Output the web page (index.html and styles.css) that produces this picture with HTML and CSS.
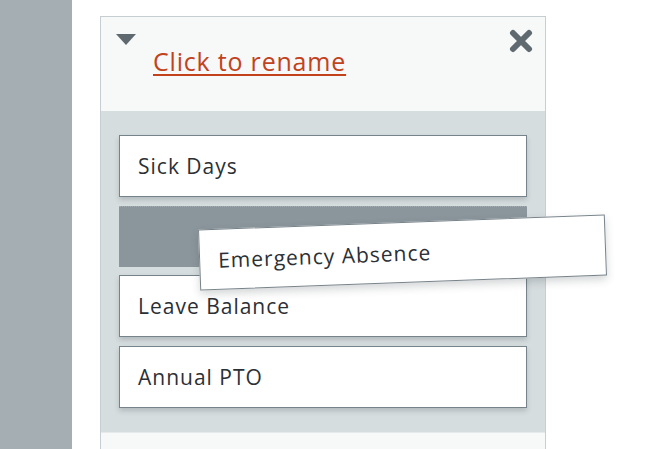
FILE: index.html
```html
<!DOCTYPE html>
<html lang="en">
<head>
    <meta charset="UTF-8">
    <meta name="viewport" content="width=device-width, initial-scale=1.0">
    <title>Leave types</title>
    <link rel="stylesheet" href="styles.css">
</head>
<body>
    <div class="page">
        <div class="sidebar"></div>
        <div class="main">
            <div class="panel">
                <div class="panel-head">
                    <svg class="caret" width="20" height="11" viewBox="0 0 20 11">
                        <path d="M0 0 H20 L10 11 Z" fill="#5f6a70"/>
                    </svg>
                    <a class="title" href="#">Click to rename</a>
                    <svg class="close" width="24" height="24" viewBox="0 0 24 24">
                        <path d="M4 4 L20 20 M20 4 L4 20" stroke="#5f6a70" stroke-width="6" stroke-linecap="round"/>
                    </svg>
                </div>
                <div class="panel-body">
                    <div class="item">Sick Days</div>
                    <div class="slot"></div>
                    <div class="item">Leave Balance</div>
                    <div class="item">Annual PTO</div>
                </div>
                <div class="panel-foot"></div>
            </div>
        </div>
        <div class="item ghost">Emergency Absence</div>
    </div>
</body>
</html>
```

FILE: styles.css
```css
* {
    padding: 0;
    margin: 0;
    box-sizing: border-box;
}
body {
    background-color: #fff;
    font-family: "Open Sans", Lato, sans-serif;
    color: #2b3035;
}
.page {
    display: flex;
    height: 449px;
    position: relative;
    overflow: hidden;
}
.sidebar {
    width: 72px;
    background-color: #a4aeb3;
}
.main {
    padding: 16px 0 0 28px;
}
.panel {
    width: 446px;
    border: 1px solid #c6ced1;
    border-bottom: none;
}
.panel-head {
    display: flex;
    align-items: flex-start;
    height: 94px;
    padding: 0 12px 0 15px;
    background-color: #f7f8f8;
}
.caret {
    margin-top: 17px;
}
.title {
    margin: 29px 0 0 17px;
    font-size: 25px;
    line-height: 30px;
    letter-spacing: .8px;
    color: #c2421b;
    text-decoration: underline;
    text-decoration-thickness: 2px;
    text-underline-offset: 3px;
}
.close {
    margin: 12px 0 0 auto;
}
.panel-body {
    display: flex;
    flex-direction: column;
    gap: 9px;
    padding: 24px 18px;
    background-color: #d6dddf;
}
.item {
    height: 62px;
    display: flex;
    align-items: center;
    padding-left: 18px;
    font-size: 21px;
    letter-spacing: 1px;
    background-color: #fff;
    border: 1.5px solid #77838a;
    box-shadow: 0 3px 5px rgba(40, 50, 55, .2);
}
.slot {
    height: 61px;
    margin-bottom: -1px;
    background-color: #8b969c;
    border-top: 1px dotted #a2acb1;
}
.panel-foot {
    height: 20px;
    background-color: #f7f8f8;
    border-top: 1px solid #e6eaeb;
}
.ghost {
    position: absolute;
    left: 199px;
    top: 222px;
    width: 407px;
    height: 61px;
    transform: rotate(-2.1deg);
    box-shadow: 0 4px 8px rgba(40, 50, 55, .2);
}
```
